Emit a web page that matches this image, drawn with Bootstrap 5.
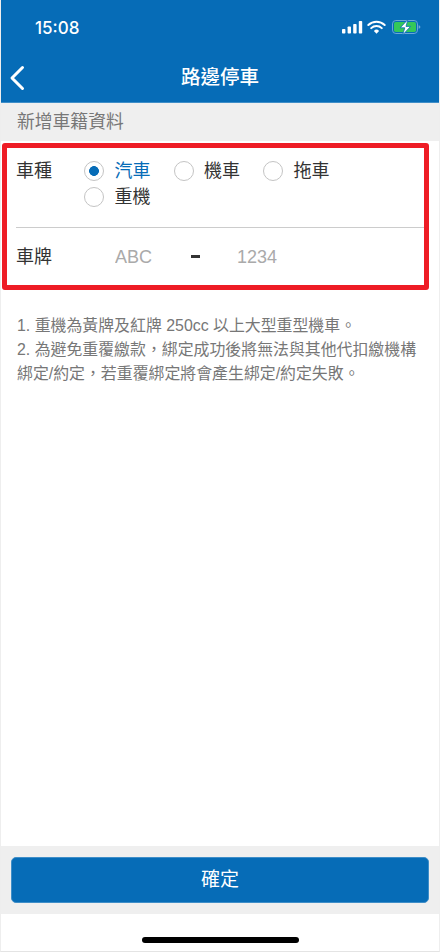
<!DOCTYPE html>
<html lang="zh-Hant">
<head>
<meta charset="utf-8">
<title>路邊停車</title>
<link href="https://cdn.jsdelivr.net/npm/bootstrap@5.3.0/dist/css/bootstrap.min.css" rel="stylesheet">
<style>
html,body{height:952px;overflow:hidden}
body{width:440px;background:#fff;color:#333;font-family:"Liberation Sans","Noto Sans CJK TC",sans-serif;border-left:1px solid #eee;border-right:1px solid #eee;border-bottom:1px solid #e4e4e4}
.app-page{height:951px}
.top-band{background:#066cb7;height:103px;margin:0 -1px;color:#fff;border-bottom:1px solid #3f8ec8}
.status-row{height:56px;padding:6px 19px 0 35px}
.clock{font-family:Inter,"Liberation Sans",sans-serif;font-size:17px;font-weight:500;line-height:36px;margin-top:4px}
.status-icons{margin-top:14px}
.title-row{height:46px}
.page-title{font-size:19.5px;font-weight:500;line-height:43px}
.back-mark{position:absolute;left:9px;top:9px}
.sect-label{background:#efefef;height:38px;font-size:17.8px;line-height:39px;color:#777;margin:0 -1px;padding-left:17px}
.form-frame{margin:2px 10px 0 1px;height:147px;border:5px solid #ee1c25;border-radius:3px;padding:0 0 0 9px}
.kind-row{height:80px;padding-top:10px;border-bottom:1px solid #ccc}
.field-name{width:68px;flex:none;font-size:18px;line-height:26px;color:#333}
.radio-set{width:270px}
.radio-item{width:89.5px;height:26px;margin:0}
.radio-item.form-check{padding:0;min-height:26px}
.radio-item .form-check-input{float:none;width:20px;height:20px;margin:0 10.5px 0 0;flex:none;border:1px solid #c4c4c4;background-color:#fff}
.radio-item .form-check-input:checked{background-color:#fff;border-color:#c4c4c4;background-image:radial-gradient(circle,#066cb7 0,#066cb7 4.6px,transparent 5.2px)}
.radio-item .form-check-input:focus{box-shadow:none}
.radio-item .form-check-label{font-size:18px;line-height:26px;color:#333;white-space:nowrap}
.radio-item .form-check-input:checked + .form-check-label{color:#066cb7}
.plate-row{height:57px}
.plate-input.form-control{border:0;padding:0;border-radius:0;font-size:18px;background:transparent;box-shadow:none;font-family:"Liberation Sans",sans-serif;height:26px;line-height:26px}
.plate-input.form-control::placeholder{color:#aaa;opacity:1}
.plate-a{width:76px}
.plate-b{width:100px}
.dash-mark{width:9px;height:3px;background:#333;margin-right:37px}
.plate-set{padding-left:31px}
.notes-box{margin:24px 0 0 16px;font-size:15.9px;line-height:24px;color:#777;width:410px}
.foot-band{background:#efefef;height:68px;padding:11px 11px 0;margin:0 -1px}
.ok-btn.btn{background:#066cb7;border:1px solid #3f8ec8;border-radius:5px;color:#fff;font-size:19px;height:46px;line-height:42px;padding:0}
.home-zone{height:37px}
.home-bar{width:157px;height:6px;background:#000;border-radius:3px;margin-top:23px}
</style>
</head>
<body>
<div class="app-page d-flex flex-column">
  <header class="top-band">
    <div class="status-row d-flex justify-content-between align-items-start">
      <span class="clock">15:08</span>
      <svg class="status-icons" width="80" height="16" viewBox="0 0 80 16" aria-hidden="true">
        <g fill="#fff">
          <rect x="1" y="9" width="3.4" height="4.5" rx=".8"/>
          <rect x="6.6" y="6.5" width="3.4" height="7" rx=".8"/>
          <rect x="12.2" y="4" width="3.4" height="9.5" rx=".8"/>
          <rect x="17.8" y="1" width="3.4" height="12.5" rx=".8"/>
          <path d="M35.5 13.8l-2.6-2.9a3.6 3.6 0 0 1 5.2 0z"/>
        </g>
        <g fill="none" stroke="#fff" stroke-width="2" stroke-linecap="round">
          <path d="M30.2 8.1a7.6 7.6 0 0 1 10.6 0"/>
          <path d="M27.3 5a11.9 11.9 0 0 1 16.4 0"/>
        </g>
        <rect x="51.5" y=".5" width="25" height="13" rx="3.4" fill="none" stroke="#6aa6d6" stroke-width="1"/>
        <rect x="53" y="2" width="22" height="10" rx="1.8" fill="#34c759"/>
        <path d="M77.6 5.2c1.2.3 1.8 1 1.8 1.8s-.6 1.5-1.8 1.8z" fill="#6aa6d6"/>
        <path d="M67 -.6L59.2 7.8h4.6L61.6 15l8-8.6h-4.6z" fill="#fff" stroke="#066cb7" stroke-width=".8"/>
      </svg>
    </div>
    <div class="title-row position-relative text-center">
      <svg class="back-mark" width="16" height="26" viewBox="0 0 16 26" aria-hidden="true"><path d="M13.5 2.5L3 13l10.5 10.5" fill="none" stroke="#fff" stroke-width="3" stroke-linecap="round" stroke-linejoin="round"/></svg>
      <h1 class="page-title m-0">路邊停車</h1>
    </div>
  </header>
  <div class="sect-label">新增車籍資料</div>
  <form class="form-frame">
    <div class="kind-row d-flex">
      <div class="field-name">車種</div>
      <div class="radio-set d-flex flex-wrap align-content-start">
        <div class="radio-item form-check d-flex align-items-center"><input class="form-check-input" type="radio" name="kind" id="k1" checked><label class="form-check-label" for="k1">汽車</label></div>
        <div class="radio-item form-check d-flex align-items-center"><input class="form-check-input" type="radio" name="kind" id="k2"><label class="form-check-label" for="k2">機車</label></div>
        <div class="radio-item form-check d-flex align-items-center"><input class="form-check-input" type="radio" name="kind" id="k3"><label class="form-check-label" for="k3">拖車</label></div>
        <div class="radio-item form-check d-flex align-items-center"><input class="form-check-input" type="radio" name="kind" id="k4"><label class="form-check-label" for="k4">重機</label></div>
      </div>
    </div>
    <div class="plate-row d-flex align-items-center">
      <div class="field-name">車牌</div>
      <div class="plate-set d-flex align-items-center">
        <input class="plate-input plate-a form-control" type="text" placeholder="ABC" aria-label="ABC">
        <span class="dash-mark"></span>
        <input class="plate-input plate-b form-control" type="text" placeholder="1234" aria-label="1234">
      </div>
    </div>
  </form>
  <div class="notes-box flex-grow-1">
    <div>1. 重機為黃牌及紅牌 250cc 以上大型重型機車。</div>
    <div>2. 為避免重覆繳款，綁定成功後將無法與其他代扣繳機構綁定/約定，若重覆綁定將會產生綁定/約定失敗。</div>
  </div>
  <div class="foot-band">
    <button type="button" class="ok-btn btn w-100">確定</button>
  </div>
  <div class="home-zone d-flex justify-content-center"><div class="home-bar"></div></div>
</div>
<script src="https://cdn.jsdelivr.net/npm/bootstrap@5.3.0/dist/js/bootstrap.bundle.min.js"></script>
</body>
</html>
